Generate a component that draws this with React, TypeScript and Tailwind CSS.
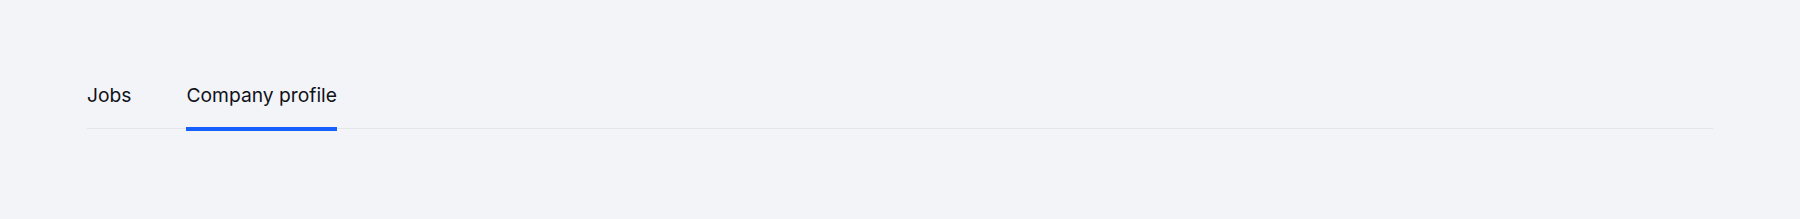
export default function App() {
  const tabs = ['Jobs', 'Company profile']
  const active = 1
  return (
    <div className="min-h-[219px] bg-[#f3f4f8] px-[87px] pt-[81px]" style={{ fontFamily: 'Inter, "Noto Sans", sans-serif' }}>
      <div className="flex gap-[55px] border-b border-[#e3e5ea]">
        {tabs.map((t, i) => (
          <button
            key={t}
            className={
              i === active
                ? '-mb-[3px] border-b-[4px] border-[#1660ff] pb-[18px] text-[19.25px] leading-[28px] text-[#101218]'
                : 'pb-[19px] text-[19.25px] leading-[28px] text-[#101218]'
            }
          >
            {t}
          </button>
        ))}
      </div>
    </div>
  )
}
